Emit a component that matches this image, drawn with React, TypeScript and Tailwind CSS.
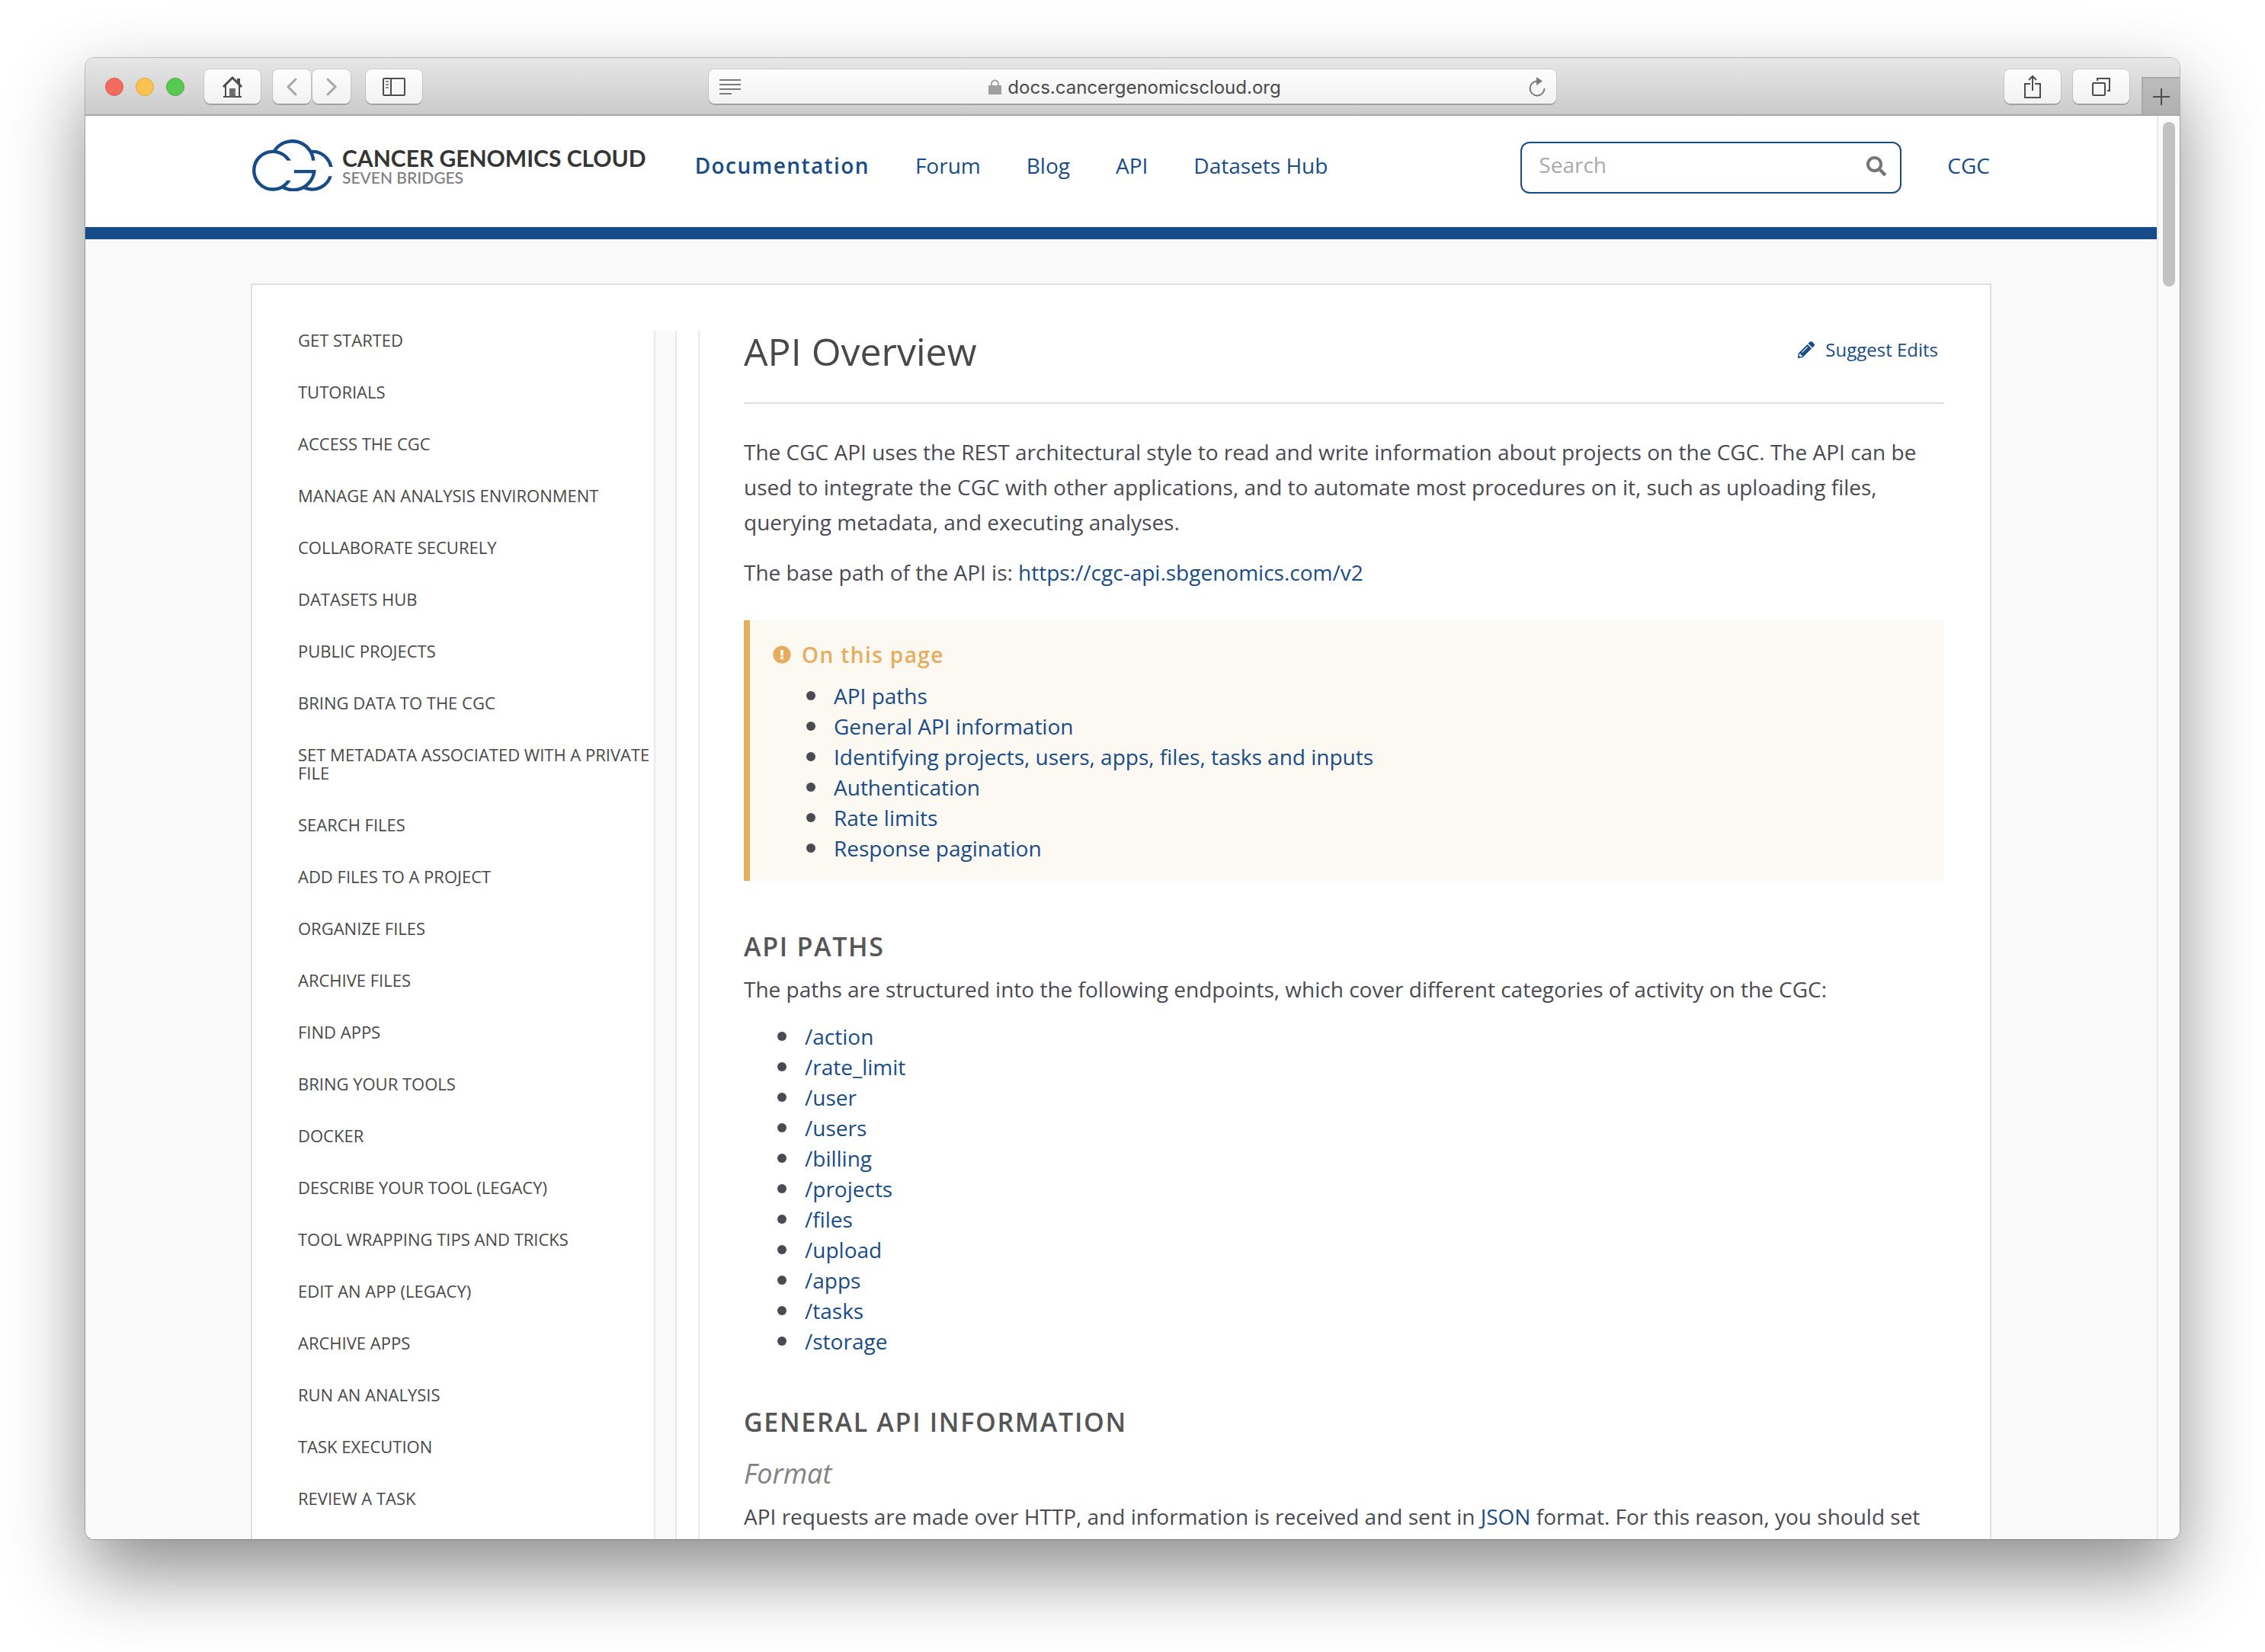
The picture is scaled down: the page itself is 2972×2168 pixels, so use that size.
import React from "react";
import { FaExclamationCircle, FaPencilAlt, FaSearch } from "react-icons/fa";

const sidebarItems = [
  "Get started",
  "Tutorials",
  "Access the CGC",
  "Manage an analysis environment",
  "Collaborate securely",
  "Datasets Hub",
  "Public projects",
  "Bring data to the CGC",
  "Set metadata associated with a private file",
  "Search files",
  "Add files to a project",
  "Organize files",
  "Archive files",
  "Find apps",
  "Bring your tools",
  "Docker",
  "Describe your tool (legacy)",
  "Tool wrapping tips and tricks",
  "Edit an app (legacy)",
  "Archive apps",
  "Run an analysis",
  "Task execution",
  "Review a task",
];

const onThisPage = [
  "API paths",
  "General API information",
  "Identifying projects, users, apps, files, tasks and inputs",
  "Authentication",
  "Rate limits",
  "Response pagination",
];

const endpoints = [
  "/action",
  "/rate_limit",
  "/user",
  "/users",
  "/billing",
  "/projects",
  "/files",
  "/upload",
  "/apps",
  "/tasks",
  "/storage",
];

const navItems = ["Forum", "Blog", "API", "Datasets Hub"];

function ToolbarButton({ label, narrow, children }: { label: string; narrow?: boolean; children: React.ReactNode }) {
  return (
    <button
      type="button"
      aria-label={label}
      className={
        (narrow ? "w-[50px]" : "w-[74px]") +
        " flex h-[45px] shrink-0 items-center justify-center rounded-lg bg-linear-to-b from-[#fdfdfd] to-[#f2f2f2] shadow-[0_0_0_1px_rgba(0,0,0,0.1),0_2px_0_rgba(0,0,0,0.18)]"
      }
    >
      {children}
    </button>
  );
}

function Toolbar() {
  return (
    <div className="relative flex h-[76px] shrink-0 items-center border-b-2 border-[#a6a6a6] bg-linear-to-b from-[#e7e7e7] to-[#cbcbcb] pt-px">
      <div className="flex flex-1 items-center">
        <div className="ml-[26px] flex gap-4">
          <button type="button" aria-label="Close" className="size-6 rounded-full border border-[#dd5a4d] bg-[#f26b5f]" />
          <button type="button" aria-label="Minimize" className="size-6 rounded-full border border-[#e0a53b] bg-[#fac250]" />
          <button type="button" aria-label="Zoom" className="size-6 rounded-full border border-[#44ae3f] bg-[#58ca54]" />
        </div>
        <div className="ml-[26px] flex items-center">
          <ToolbarButton label="Home">
            <svg width="28" height="30" viewBox="0 0 28 30" fill="none">
              <path d="M2 15 14 3 26 15" stroke="#4d4d4d" strokeWidth="3" />
              <path d="M22 4v7" stroke="#4d4d4d" strokeWidth="4" />
              <path d="M5 13v14M23 13v14M2 28h24" stroke="#4d4d4d" strokeWidth="2" />
              <path d="M10 17h8v11h-8z" fill="#6d6d6d" />
              <path d="M16 22h1v1h-1z" fill="#fff" />
            </svg>
          </ToolbarButton>
          <div className="ml-4 flex gap-[2px]">
            <ToolbarButton label="Back" narrow>
              <svg width="16" height="26" viewBox="0 0 16 26" fill="none">
                <path d="M13 3 3 13l10 10" stroke="#a8a8a8" strokeWidth="3" strokeLinecap="round" />
              </svg>
            </ToolbarButton>
            <ToolbarButton label="Forward" narrow>
              <svg width="16" height="26" viewBox="0 0 16 26" fill="none">
                <path d="m3 3 10 10L3 23" stroke="#a8a8a8" strokeWidth="3" strokeLinecap="round" />
              </svg>
            </ToolbarButton>
          </div>
          <div className="ml-5">
            <ToolbarButton label="Sidebar">
              <svg width="30" height="24" viewBox="0 0 30 24" fill="none">
                <rect x="1" y="1" width="28" height="22" rx="1" stroke="#4d4d4d" strokeWidth="2" />
                <path d="M11 1v22" stroke="#4d4d4d" strokeWidth="2" />
                <path d="M4 5h4M4 9h4M4 13h4" stroke="#8a8a8a" strokeWidth="2" />
              </svg>
            </ToolbarButton>
          </div>
        </div>
      </div>

      <div className="flex h-[45px] w-full max-w-[1112px] items-center justify-between rounded-lg bg-linear-to-b from-[#fdfdfd] to-[#f2f2f2] px-[14px] shadow-[0_0_0_1px_rgba(0,0,0,0.1),0_2px_0_rgba(0,0,0,0.18)]">
        <button type="button" aria-label="Reader view">
          <svg width="28" height="20" viewBox="0 0 28 20">
            <path d="M0 1h28M0 7h28M0 13h28M0 19h16" stroke="#7b7b7b" strokeWidth="2" />
          </svg>
        </button>
        <div className="flex items-center gap-2">
          <svg width="17" height="20" viewBox="0 0 17 20" fill="none" aria-hidden="true">
            <path d="M4 9V6a4.5 4.5 0 0 1 9 0v3" stroke="#a0a0a0" strokeWidth="2" />
            <path d="M0 8h17v12H0z" fill="#a0a0a0" />
          </svg>
          <span className="pt-[2px] font-[Inter,sans-serif] text-[24px] leading-8 text-[#4a4a4a]">docs.cancergenomicscloud.org</span>
        </div>
        <button type="button" aria-label="Reload">
          <svg width="22" height="26" viewBox="0 0 22 26" fill="none">
            <path d="M10.500 5.500A9.500 9.500 0 1 0 20.500 15" stroke="#7b7b7b" strokeWidth="2" />
            <path d="M10 0 18 5.500 10 11z" fill="#7b7b7b" />
          </svg>
        </button>
      </div>

      <div className="flex flex-1 items-center justify-end">
        <div className="mr-4 flex gap-4">
          <ToolbarButton label="Share">
            <svg width="24" height="32" viewBox="0 0 24 32" fill="none">
              <path d="M9 12H2v18h20V12h-7M12 21V3" stroke="#4d4d4d" strokeWidth="2" />
              <path d="m7 7 5-5 5 5" stroke="#4d4d4d" strokeWidth="2" />
            </svg>
          </ToolbarButton>
          <ToolbarButton label="Show tabs">
            <svg width="26" height="26" viewBox="0 0 26 26" fill="none">
              <rect x="2" y="8" width="16" height="16" rx="1" stroke="#4d4d4d" strokeWidth="2" />
              <path d="M8 5V2h16v16h-3" stroke="#4d4d4d" strokeWidth="2" />
            </svg>
          </ToolbarButton>
        </div>
        <button
          type="button"
          aria-label="New tab"
          className="mt-6 flex h-[49px] w-[50px] shrink-0 items-center justify-center self-end border-t-2 border-l-2 border-[#a9a9a9] bg-linear-to-b from-[#bcbcbc] to-[#b0b0b0]"
        >
          <svg width="22" height="22" viewBox="0 0 22 22">
            <path d="M11 0v22M0 11h22" stroke="#4d4d4d" strokeWidth="2" />
          </svg>
        </button>
      </div>
    </div>
  );
}

function Logo() {
  return (
    <a href="#home" className="flex shrink-0 items-center gap-3" aria-label="Cancer Genomics Cloud, Seven Bridges">
      <svg width="106" height="68" viewBox="0 0 106 68" fill="none" stroke="#184c88" strokeWidth="4.400">
        <defs>
          <clipPath id="cloud-left">
            <path d="M0 0h60v27.700H36v26h24V68H0z" />
          </clipPath>
          <clipPath id="cloud-top">
            <path d="M0 0h106v27.700H0z" />
          </clipPath>
          <clipPath id="cloud-bottom">
            <path d="M0 40h106v28H0z" />
          </clipPath>
          <clipPath id="cloud-right">
            <path d="M0 0h106v36H0zM0 48.300h106V68H0z" />
          </clipPath>
        </defs>
        <circle cx="27" cy="40.700" r="24.800" clipPath="url(#cloud-left)" />
        <path d="M28.500 16A27.800 27.800 0 0 1 80.300 30" clipPath="url(#cloud-top)" />
        <g clipPath="url(#cloud-bottom)">
          <path d="M38 61.400A27.800 27.800 0 0 0 81.500 40" />
          <path d="M55 42h28" />
        </g>
        <path d="M78 15.900A24.800 24.800 0 1 1 68 63" clipPath="url(#cloud-right)" />
      </svg>
      <span className="flex flex-col font-[Lato,sans-serif]">
        <span className="text-[30px] leading-8 font-bold whitespace-nowrap text-[#353535]">CANCER GENOMICS CLOUD</span>
        <span className="text-[21px] leading-5 font-medium whitespace-nowrap text-[#7d7d7d]">SEVEN BRIDGES</span>
      </span>
    </a>
  );
}

function Header() {
  return (
    <header className="shrink-0 border-b-16 border-[#184c88] bg-white">
      <div className="mx-auto flex h-[146px] w-full max-w-[2284px] items-center px-[2px] pb-4 text-[28px] leading-10 text-[#184c88]">
        <Logo />
        <nav className="ml-16 flex gap-[60px] whitespace-nowrap">
          <a href="#documentation" className="font-semibold tracking-wider">Documentation</a>
          {navItems.map((item) => (
            <a key={item} href={"#" + item}>{item}</a>
          ))}
        </nav>
        <form role="search" className="mt-[6px] mr-[60px] ml-auto flex h-[68px] w-[500px] items-center rounded-xl border-2 border-[#184c88] pr-[18px] pb-1 pl-[22px]">
          <input
            type="search"
            aria-label="Search"
            placeholder="Search"
            className="min-w-0 flex-1 bg-transparent pb-1 outline-none placeholder:text-[#a9a9a9]"
          />
          <button type="button" aria-label="Submit search">
            <FaSearch className="size-[26px] text-[#757575]" />
          </button>
        </form>
        <a href="#cgc">CGC</a>
      </div>
    </header>
  );
}

function Sidebar() {
  return (
    <nav aria-label="Sections" className="w-[467px] shrink-0">
      <ul className="flex flex-col gap-11">
        {sidebarItems.map((item) => (
          <li key={item}>
            <a href="#section" className="block text-[22px] leading-6 text-[#484848] uppercase">{item}</a>
          </li>
        ))}
      </ul>
    </nav>
  );
}

function LinkList({ items }: { items: string[] }) {
  return (
    <ul className="pl-20 leading-10">
      {items.map((item) => (
        <li
          key={item}
          className="relative before:absolute before:top-[14px] before:-left-9 before:size-3 before:rounded-full before:bg-[#4a4a52]"
        >
          <a href="#item" className="text-[#184c88]">{item}</a>
        </li>
      ))}
    </ul>
  );
}

function Article() {
  return (
    <main className="min-w-0 flex-1 border-l-2 border-[#e9e9e9] pr-[60px] pl-[58px] text-[28px] leading-[46px] text-[#4a4a52]">
      <div className="flex h-24 items-start justify-between border-b-2 border-[#dfdfdf]">
        <h1 className="text-[50px] leading-[54px] text-[#484848]">API Overview</h1>
        <a href="#edit" className="flex items-center gap-[14px] pt-[5px] pr-2 text-[24px] leading-10 text-[#184c88]">
          <FaPencilAlt className="size-[22px]" />
          Suggest Edits
        </a>
      </div>
      <p className="mt-10">
        The CGC API uses the REST architectural style to read and write information about projects on the CGC. The API
        can be used to integrate the CGC with other applications, and to automate most procedures on it, such as
        uploading files, querying metadata, and executing analyses.
      </p>
      <p className="mt-5">
        The base path of the API is: <a href="#base" className="text-[#184c88]">https://cgc-api.sbgenomics.com/v2</a>
      </p>

      <section className="mt-10 border-l-8 border-[#e8ad5c] bg-[#fcf8f2] pt-[25px] pb-[23px] pl-[30px]">
        <h2 className="mb-[14px] flex items-center gap-[14px] leading-10 font-semibold tracking-wider text-[#e8ad5c]">
          <FaExclamationCircle className="size-6" />
          On this page
        </h2>
        <LinkList items={onThisPage} />
      </section>

      <h2 className="mt-[63px] text-[34px] leading-[46px] font-semibold tracking-wider text-[#555555]">API PATHS</h2>
      <p className="mt-[10px] mb-[19px]">
        The paths are structured into the following endpoints, which cover different categories of activity on the CGC:
      </p>
      <LinkList items={endpoints} />

      <h2 className="mt-[63px] text-[34px] leading-[46px] font-semibold tracking-wider text-[#555555]">
        GENERAL API INFORMATION
      </h2>
      <h3 className="mt-[22px] text-[36px] leading-[46px] text-[#828282] italic">Format</h3>
      <p className="mt-[10px]">
        API requests are made over HTTP, and information is received and sent in{" "}
        <a href="#json" className="text-[#184c88]">JSON</a> format. For this reason, you should set
      </p>
    </main>
  );
}

export default function App() {
  return (
    <div className="h-screen overflow-hidden bg-white px-[112px] pt-[76px] pb-[148px] font-[Open_Sans,sans-serif]">
      <div className="flex h-full flex-col overflow-hidden rounded-xl bg-white shadow-[0_0_0_1px_rgba(0,0,0,0.22),0_44px_100px_rgba(0,0,0,0.45)]">
        <Toolbar />
        <div className="flex min-h-0 flex-1">
          <div className="flex min-w-0 flex-1 flex-col overflow-hidden bg-[#f9f9f9]">
            <Header />
            <div className="mx-auto mt-[58px] flex w-full max-w-[2284px] flex-1 border-2 border-b-0 border-[#dfdfdf] bg-white pt-[60px] pl-[60px]">
              <Sidebar />
              <div className="mr-7 w-[30px] shrink-0 border-x-2 border-[#e9e9e9] bg-[#f9f9f9]" />
              <Article />
            </div>
          </div>
          <div className="w-[30px] shrink-0 border-l-2 border-[#e8e8e8] bg-[#fafafa] pt-2 pl-[6px]">
            <div className="h-[216px] w-4 rounded-full bg-[#c2c2c2]" />
          </div>
        </div>
      </div>
    </div>
  );
}
